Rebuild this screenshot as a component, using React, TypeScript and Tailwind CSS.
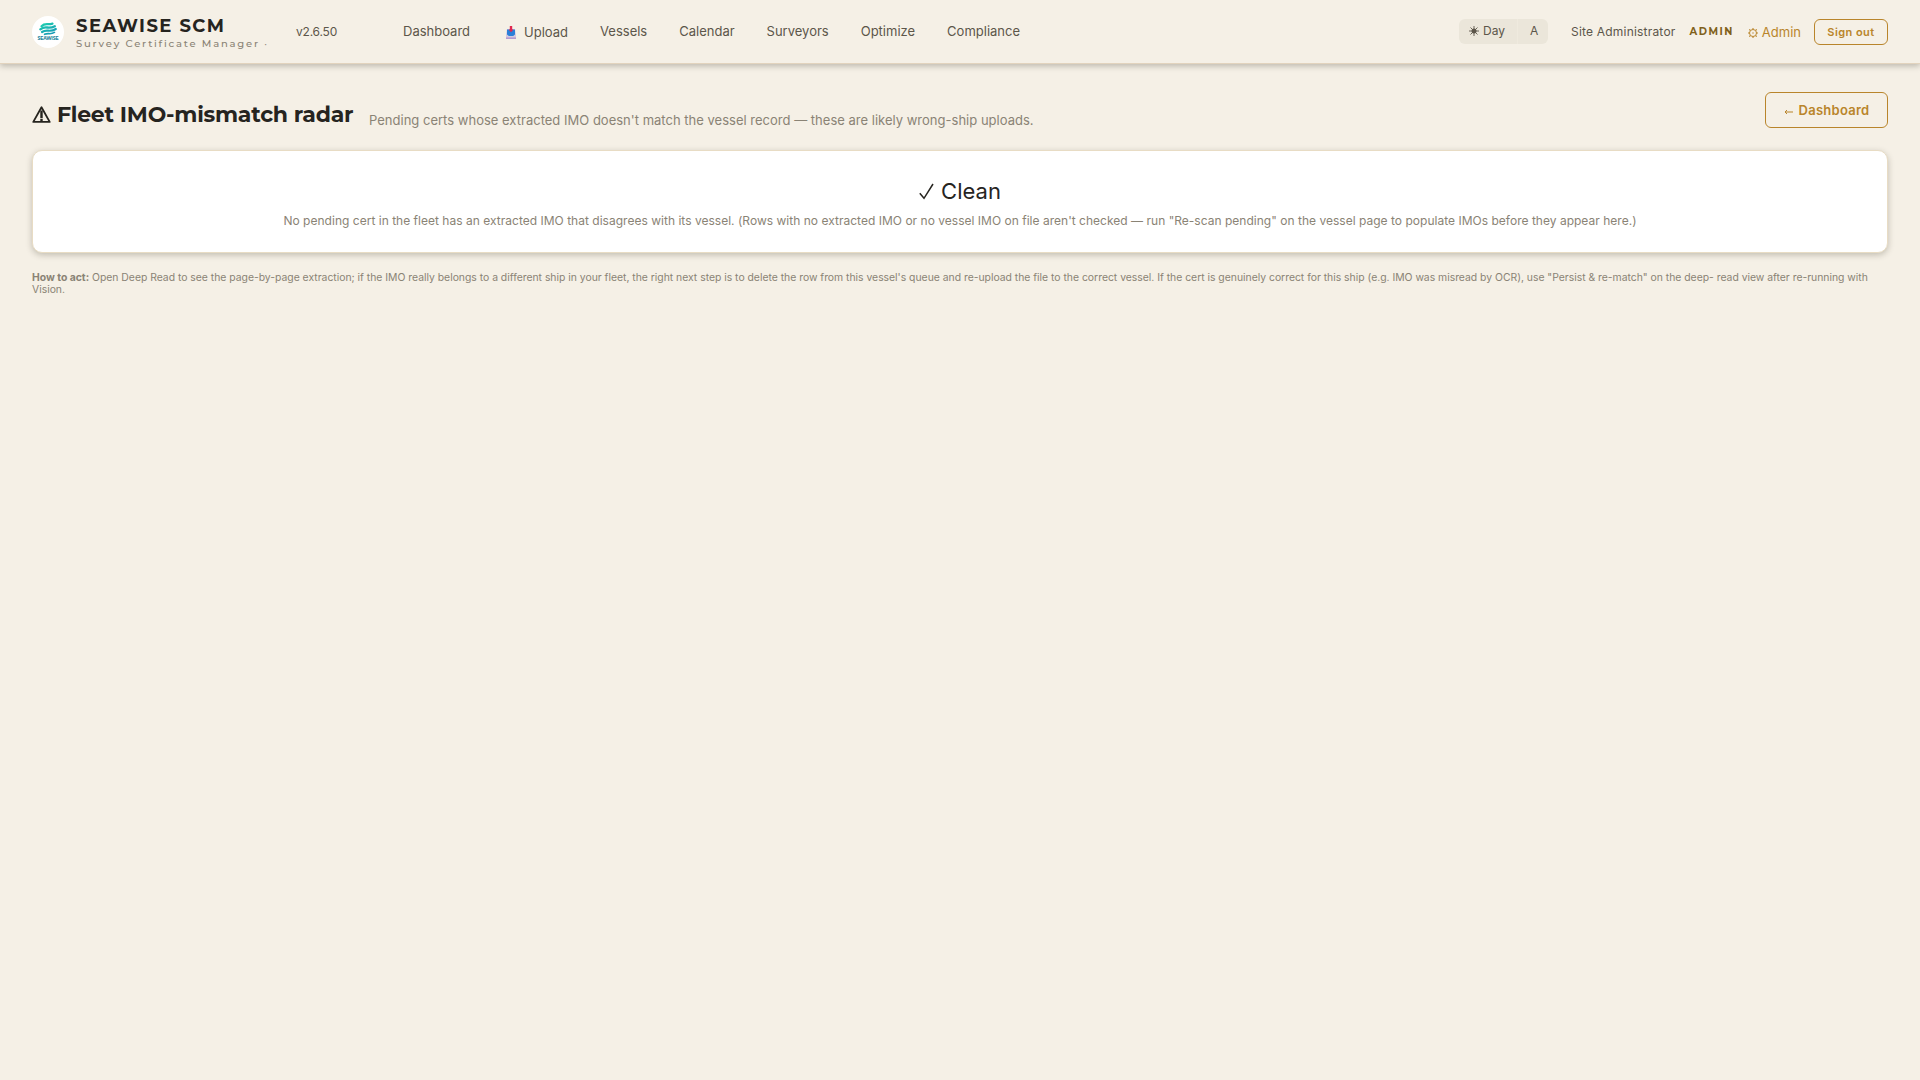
const navItems = [
  { label: "Dashboard" },
  { label: "Upload", icon: <UploadIcon /> },
  { label: "Vessels" },
  { label: "Calendar" },
  { label: "Surveyors" },
  { label: "Optimize" },
  { label: "Compliance" },
];

function UploadIcon() {
  return (
    <svg className="w-[10px] h-[13px] ml-[4px] mr-[8px] shrink-0" viewBox="0 0 10 13">
      <path d="M1 3h8l1 6v4H0V9z" fill="#d3c9df" />
      <path d="M0 11.4h10V13H0z" fill="#b49bd0" />
      <path d="M1 3.5h8v5L7.2 10H2.8L1 8.5z" fill="#2b7fd8" />
      <path d="M3.8 0h2.4v3.4h1.3L5 6.3 2.5 3.4h1.3z" fill="#e0284f" />
    </svg>
  );
}

function SunIcon() {
  return (
    <svg className="w-[10px] h-[10px] shrink-0" viewBox="0 0 10 10" stroke="currentColor" strokeWidth="0.9">
      <circle cx="5" cy="5" r="2.5" fill="currentColor" stroke="none" />
      <path d="M5 0v10M0 5h10M1.5 1.5l7 7M8.5 1.5l-7 7" />
    </svg>
  );
}

function GearIcon() {
  return (
    <svg className="w-[10px] h-[10px] shrink-0" viewBox="0 0 10 10" fill="none" stroke="currentColor">
      <circle cx="5" cy="5" r="3.5" strokeWidth="1" />
      <circle cx="5" cy="5" r="0.7" fill="currentColor" stroke="none" />
      <path d="M5 0v1.4M5 8.6V10M0 5h1.4M8.6 5H10M1.3 1.3l1 1M7.7 7.7l1 1M8.7 1.3l-1 1M2.3 7.7l-1 1" strokeWidth="1.1" />
    </svg>
  );
}

function WarningIcon() {
  return (
    <svg className="w-[19px] h-[17px] -mt-px shrink-0" viewBox="0 0 19 17" fill="none" stroke="currentColor">
      <path d="M9.5 1.2L1.3 15.9h16.4z" strokeWidth="1.8" strokeLinejoin="round" />
      <path d="M9.5 4.5v7.7M9.5 13v2" strokeWidth="2.4" />
    </svg>
  );
}

function Logo() {
  return (
    <svg className="w-8 h-8 shrink-0" viewBox="0 0 32 32">
      <defs>
        <linearGradient id="wave" gradientUnits="userSpaceOnUse" x1="12" y1="6" x2="18" y2="20">
          <stop offset="0" stopColor="#1fd1b0" />
          <stop offset="1" stopColor="#1594b5" />
        </linearGradient>
      </defs>
      <circle cx="16" cy="16" r="16" fill="#fff" />
      <g fill="none" stroke="url(#wave)" strokeLinecap="round">
        <path d="M9.5 10.2C13 6.5 15.5 9.3 20.5 7.6" strokeWidth="2.2" />
        <path d="M8.3 13.3C13.5 9 16 13.8 22.8 10.2" strokeWidth="2.3" />
        <path d="M10 16C15 12.6 17.5 17 23.8 13" strokeWidth="2.2" />
        <path d="M12.5 18.3C16.5 16.6 18.5 19 22.5 16.4" strokeWidth="1.6" />
      </g>
      <text x="16" y="23.8" textAnchor="middle" textLength="21" fontSize="4.6" fontWeight="700" fill="#197f99" className="font-['Montserrat','Inter',sans-serif]">
        SEAWISE
      </text>
    </svg>
  );
}

function Header() {
  return (
    <header className="h-16 px-8 flex items-center border-b border-[#e2d3bd] shadow-[0_2px_6px_rgba(40,35,20,0.28)]">
      <Logo />
      <div className="ml-3 pt-[3px] w-[220px] flex flex-col">
        <span className="font-['Montserrat','Inter',sans-serif] text-[18px] leading-[20px] font-bold tracking-[1.44px] text-[#26241f] whitespace-nowrap">
          SEAWISE SCM
        </span>
        <span className="mt-[2px] font-['Montserrat','Inter',sans-serif] text-[10px] leading-[12px] font-medium tracking-[1.78px] text-[#8a8375] whitespace-nowrap">
          Survey Certificate Manager ·
        </span>
      </div>
      <span className="w-[107px] text-xs tracking-[-0.2px] text-[#5c564a]">v2.6.50</span>
      <nav className="flex items-center gap-8 text-[13px] text-[#5c564a]">
        {navItems.map((item) => (
          <a key={item.label} className={item.icon ? "flex items-center pt-0.5" : "flex items-center"}>
            {item.icon}
            {item.label}
          </a>
        ))}
      </nav>

      <div className="ml-auto flex items-center text-[#5c564a]">
        <div className="flex h-[25px] mr-[23px] -mt-px rounded-md bg-[#ebe6da] text-xs leading-[25px]">
          <span className="w-[59px] pl-[10px] pb-px flex items-center gap-1 border-r border-[#efeade]">
            <SunIcon />
            Day
          </span>
          <span className="w-[30px] pl-3 -mt-px">A</span>
        </div>
        <span className="mr-[14px] text-xs tracking-[0.2px]">Site Administrator</span>
        <span className="mr-[14px] font-['Montserrat','Inter',sans-serif] text-[10px] font-bold tracking-[1.5px] text-[#80601a]">
          ADMIN
        </span>
        <a className="mr-[13px] mt-0.5 flex items-center gap-[4px] text-[13px] text-[#b9852b]">
          <GearIcon />
          Admin
        </a>
        <button className="w-[74px] h-[26px] pt-px rounded-md border border-[#b9852b] text-[11px] font-semibold tracking-[0.44px] text-[#b9852b]">
          Sign out
        </button>
      </div>
    </header>
  );
}

export default function App() {
  return (
    <div className="min-h-screen bg-[#f5f0e6] font-['Inter',sans-serif] text-[#26241f]">
      <Header />
      <main className="px-8 pt-7">
        <div className="flex h-[36px] items-start">
          <h1 className="mt-[8px] w-[337px] flex items-center gap-[6px] font-['Montserrat','Inter',sans-serif] text-[22px] leading-[30px] font-bold tracking-[-0.23px] whitespace-nowrap">
            <WarningIcon />
            Fleet IMO-mismatch radar
          </h1>
          <p className="mt-[18px] text-[13px] leading-[20px] tracking-[0.01px] text-[#8a8375]">
            Pending certs whose extracted IMO doesn't match the vessel record — these are likely wrong-ship uploads.
          </p>
          <button className="ml-auto w-[123px] h-9 pt-px shrink-0 flex items-center justify-center gap-[6px] rounded-md border border-[#b9852b] text-[13px] font-semibold tracking-[0.26px] text-[#b9852b]">
            <svg className="w-[9px] h-[6px] mt-0.5" viewBox="0 0 9 6" fill="none" stroke="currentColor">
              <path d="M9 3H1M3 1L1 3l2 2" />
            </svg>
            Dashboard
          </button>
        </div>

        <section className="mt-[22px] h-[103px] rounded-[10px] border border-[#e8dcc4] bg-white text-center shadow-[0_2px_6px_rgba(40,35,20,0.25)]">
          <div className="pt-[26px] flex items-center justify-center gap-[7px] text-[22px] leading-[28px]">
            <svg className="w-[15px] h-[17px]" viewBox="0 0 15 17" fill="none" stroke="currentColor" strokeWidth="1.5">
              <path d="M0.8 10.2L5 15.3L14 1" />
            </svg>
            Clean
          </div>
          <p className="mt-[7px] text-xs leading-[18px] tracking-[0.018px] text-[#8a8375]">
            No pending cert in the fleet has an extracted IMO that disagrees with its vessel. (Rows with no extracted IMO or no vessel IMO on file aren't checked — run "Re-scan pending" on the vessel page to populate IMOs before they appear here.)
          </p>
        </section>

        <p className="mt-[19px] text-[10.4px] leading-[12.4px] tracking-[-0.014px] text-[#8a8375]">
          <strong className="font-bold">How to act:</strong> Open Deep Read to see the page-by-page extraction; if the IMO really belongs to a different ship in your fleet, the right next step is to delete the row from this vessel's queue and re-upload the file to the correct vessel. If the cert is genuinely correct for this ship (e.g. IMO was misread by OCR), use "Persist &amp; re-match" on the deep- read view after re-running with Vision.
        </p>
      </main>
    </div>
  );
}
